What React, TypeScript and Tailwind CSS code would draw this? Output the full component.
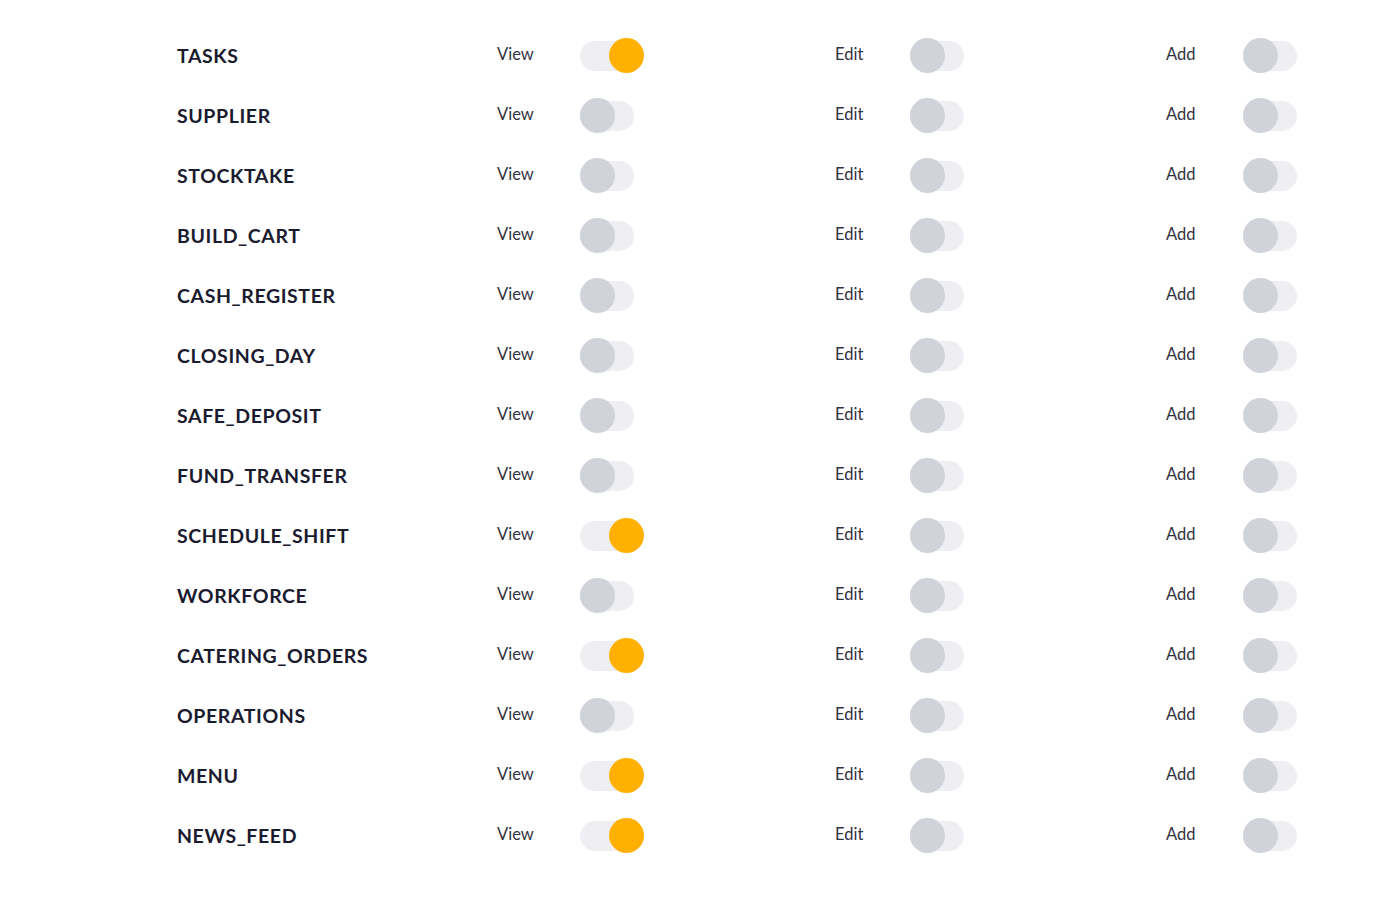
import React, { useState } from 'react';

interface Permission {
  name: string;
  view: boolean;
  edit: boolean;
  add: boolean;
}

const initial: Permission[] = [
  { name: 'TASKS', view: true, edit: false, add: false },
  { name: 'SUPPLIER', view: false, edit: false, add: false },
  { name: 'STOCKTAKE', view: false, edit: false, add: false },
  { name: 'BUILD_CART', view: false, edit: false, add: false },
  { name: 'CASH_REGISTER', view: false, edit: false, add: false },
  { name: 'CLOSING_DAY', view: false, edit: false, add: false },
  { name: 'SAFE_DEPOSIT', view: false, edit: false, add: false },
  { name: 'FUND_TRANSFER', view: false, edit: false, add: false },
  { name: 'SCHEDULE_SHIFT', view: true, edit: false, add: false },
  { name: 'WORKFORCE', view: false, edit: false, add: false },
  { name: 'CATERING_ORDERS', view: true, edit: false, add: false },
  { name: 'OPERATIONS', view: false, edit: false, add: false },
  { name: 'MENU', view: true, edit: false, add: false },
  { name: 'NEWS_FEED', view: true, edit: false, add: false },
];

const Toggle: React.FC<{ on: boolean; onClick: () => void }> = ({ on, onClick }) => (
  <button onClick={onClick} className="relative w-[54px] h-[30px] mt-[2px] rounded-full bg-[#efeff3] shrink-0">
    <span
      className={
        on
          ? 'absolute top-[-3px] left-[29px] w-[35px] h-[35px] rounded-full bg-[#ffb000]'
          : 'absolute top-[-3px] left-0 w-[35px] h-[35px] rounded-full bg-[#d0d3da]'
      }
    />
  </button>
);

export default function App() {
  const [rows, setRows] = useState(initial);

  const flip = (i: number, key: 'view' | 'edit' | 'add') =>
    setRows((r) => r.map((p, j) => (j === i ? { ...p, [key]: !p[key] } : p)));

  return (
    <div className="min-h-[906px] bg-white pt-[25px] font-['Lato',sans-serif]">
      {rows.map((p, i) => (
        <div key={p.name} className="flex items-center h-[60px] pl-[177px]">
          <div className="w-[320px] text-[19.5px] font-bold text-[#1b1b2f] tracking-[0.6px] mt-[2px]">{p.name}</div>
          <div className="w-[338px] flex items-center">
            <span className="w-[83px] text-[16.5px] text-[#33333f] -mt-[1px]">View</span>
            <Toggle on={p.view} onClick={() => flip(i, 'view')} />
          </div>
          <div className="w-[331px] flex items-center">
            <span className="w-[75px] text-[16.5px] text-[#33333f] -mt-[1px]">Edit</span>
            <Toggle on={p.edit} onClick={() => flip(i, 'edit')} />
          </div>
          <div className="flex items-center">
            <span className="w-[77px] text-[16.5px] text-[#33333f] -mt-[1px]">Add</span>
            <Toggle on={p.add} onClick={() => flip(i, 'add')} />
          </div>
        </div>
      ))}
    </div>
  );
}
